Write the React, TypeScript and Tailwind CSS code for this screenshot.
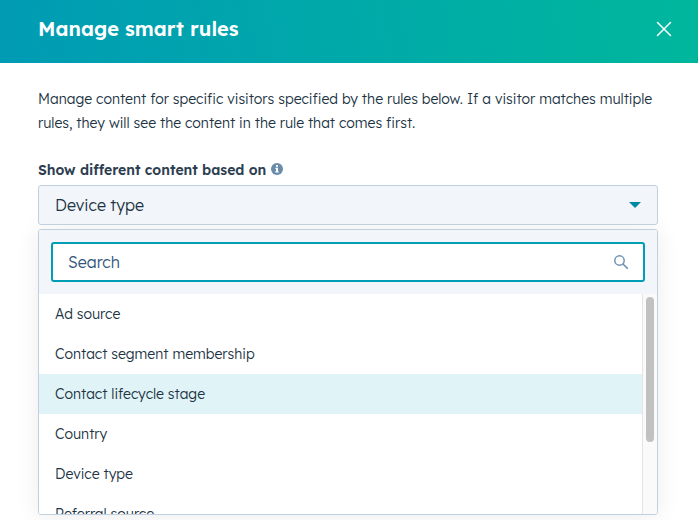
import { useState } from "react";

const options = [
  "Ad source",
  "Contact segment membership",
  "Contact lifecycle stage",
  "Country",
  "Device type",
  "Referral source",
];

function Header() {
  return (
    <header className="flex h-[63px] items-center justify-between bg-linear-80 from-[#009bb4] to-[#00b79c] pr-[26px] pb-1.5 pl-[38px] text-white">
      <h1 className="text-xl font-semibold">Manage smart rules</h1>
      <button type="button" aria-label="Close" className="flex size-4 items-center justify-center">
        <svg viewBox="0 0 16 16" className="size-4" fill="none" stroke="currentColor" strokeWidth="1.5" strokeLinecap="round">
          <path d="M1.5 1.5l13 13M14.5 1.5l-13 13" />
        </svg>
      </button>
    </header>
  );
}

function InfoIcon() {
  return (
    <svg viewBox="0 0 12 12" className="mb-0.5 size-3" aria-hidden="true">
      <circle cx="6" cy="6" r="6" fill="#6a8cab" />
      <path d="M5 2h2v1.7H5zM4.4 4.8H7v3.4h.7v1.4H4.3V8.2H5V6h-.6z" fill="#fff" />
    </svg>
  );
}

export default function App() {
  const [rule, setRule] = useState("Device type");
  const [active, setActive] = useState("Contact lifecycle stage");

  return (
    <div className="min-h-screen bg-white font-['Lexend_Deca','Lexend',Inter,sans-serif] font-light text-[#213343]">
      <Header />
      <main className="pt-6 pr-10 pl-[38px]">
        <p className="text-sm leading-6">
          Manage content for specific visitors specified by the rules below. If a visitor matches multiple rules, they
          will see the content in the rule that comes first.
        </p>
        <div className="mt-6 flex h-[22px] items-center gap-[5px]">
          <label htmlFor="rule" className="text-sm font-semibold text-[#2d3e50]">
            Show different content based on
          </label>
          <InfoIcon />
        </div>
        <div className="relative mt-1">
          <select
            id="rule"
            value={rule}
            onChange={(e) => setRule(e.target.value)}
            className="block h-10 w-full appearance-none rounded-[3px] border border-[#c0d0de] bg-[#f2f6fa] px-4 text-base outline-none"
          >
            {options.map((o) => (
              <option key={o}>{o}</option>
            ))}
          </select>
          <svg viewBox="0 0 12 6" className="pointer-events-none absolute top-[17px] right-[17px] h-1.5 w-3" fill="#0088a5">
            <path d="M0 0h12L6 6z" />
          </svg>
        </div>
        <div className="mt-1 overflow-hidden rounded-[3px] border border-[#c0d0de] bg-white shadow-[0_1px_24px_rgba(0,0,0,0.08)]">
          <div className="bg-[#f2f6fa] p-3">
            <div className="flex h-10 items-center rounded-[3px] border-2 border-[#009eb5] bg-white px-[15px]">
              <input
                type="text"
                aria-label="Search"
                placeholder="Search"
                className="min-w-0 flex-1 bg-transparent text-base outline-none placeholder:text-[#33557a]"
              />
              <svg viewBox="0 0 14 14" className="size-3.5" fill="none" stroke="#7191b0" strokeWidth="1.5" strokeLinecap="round">
                <circle cx="5.5" cy="5.5" r="4.7" />
                <path d="M9 9l4.4 4.4" />
              </svg>
            </div>
          </div>
          <div className="flex h-[220px]">
            <div role="listbox" aria-label="Rule types" className="min-w-0 flex-1 overflow-hidden">
              {options.map((o) => (
                <button
                  key={o}
                  type="button"
                  role="option"
                  aria-selected={o === active}
                  onMouseEnter={() => setActive(o)}
                  onClick={() => setRule(o)}
                  className={`block h-10 w-full px-4 text-left text-sm ${o === active ? "bg-[#e0f3f7]" : "bg-white"}`}
                >
                  {o}
                </button>
              ))}
            </div>
            <div className="w-[15px] border-l border-[#e4e4e4] bg-[#fafafa] px-[3px] pt-[3px]">
              <div className="h-[145px] rounded-full bg-[#c1c1c1]" />
            </div>
          </div>
        </div>
      </main>
    </div>
  );
}
